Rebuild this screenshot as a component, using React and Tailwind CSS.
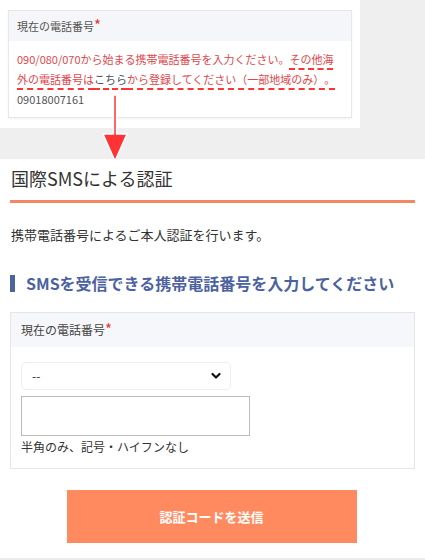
const font = { fontFamily: '"Noto Sans CJK JP", "Noto Sans", sans-serif' };

function Arrow() {
  return (
    <svg
      className="absolute left-[100px] top-[92px]"
      width="30"
      height="72"
      viewBox="0 0 30 72"
    >
      <path
        d="M13.5 3 L16.5 3 L16.5 42 L27 42 L15 69 L3 42 L13.5 42 Z"
        fill="#ff3333"
        stroke="#ffffff"
        strokeWidth="1.5"
        strokeLinejoin="round"
      />
    </svg>
  );
}

function Required() {
  return <span className="text-[#e8342f] text-[15px] leading-none align-top relative top-[-2px]">*</span>;
}

export default function App() {
  return (
    <div className="relative w-[425px] h-[560px] bg-white overflow-hidden text-[#333] [text-spacing-trim:space-all]" style={font}>
      {/* pasted screenshot of the old form */}
      <div className="bg-[#efefef] pb-[31px]">
        <div className="w-[360px] bg-white px-[8px] pt-[10px] pb-[10px]">
          <div className="border border-[#e8e8e8] shadow-[0_1px_2px_rgba(0,0,0,0.06)]">
            <div className="h-[30px] bg-[#f5f6f9] flex items-center px-[8px] text-[11px] text-[#555]">
              現在の電話番号<Required />
            </div>
            <div className="bg-white px-[8px] pt-[8px] pb-[8px] text-[11px] leading-[20px]">
              <p className="text-[#e0474c]">
                090/080/070から始まる携帯電話番号を入力ください。
                <span className="underline decoration-dashed decoration-2 decoration-[#ff3333] underline-offset-[4px]">
                  その他海外の電話番号は<span className="text-[#4a4f5c]">こちら</span>から登録してください（一部地域のみ）。
                </span>
              </p>
              <p className="text-[#555]">09018007161</p>
            </div>
          </div>
        </div>
      </div>

      {/* SMS verification */}
      <div className="px-[10px] pt-[6px]">
        <h1 className="text-[18px] leading-[26px] text-[#333] pl-px">国際SMSによる認証</h1>
        <div className="mt-[9px] h-[3px] bg-[#f4875f]" />
        <p className="mt-[22px] text-[13px] leading-[20px] pl-px">携帯電話番号によるご本人認証を行います。</p>

        <div className="mt-[26px] flex items-center gap-[11px] h-[24px]">
          <span className="w-[5px] h-[17px] bg-[#4d639c]" />
          <h2 className="text-[16px] font-bold text-[#4c62a0] leading-[24px]">SMSを受信できる携帯電話番号を入力してください</h2>
        </div>

        <div className="mt-[17px] border border-[#e6e6e6]">
          <div className="h-[34px] bg-[#f6f7fb] flex items-center px-[10px] text-[12px] text-[#444]">
            現在の電話番号<Required />
          </div>
          <div className="px-[10px] pt-[15px] pb-[12px]">
            <div className="w-[210px] h-[28px] rounded-[5px] border border-[#eeeeee] bg-white flex items-center justify-between pl-[10px] pr-[9px] text-[12px] text-[#333]">
              <span>--</span>
              <svg width="10" height="8" viewBox="0 0 10 8">
                <path d="M1.5 2 L5 5.5 L8.5 2" fill="none" stroke="#111" strokeWidth="2.2" strokeLinecap="round" strokeLinejoin="round" />
              </svg>
            </div>
            <div className="mt-[6px] w-[229px] h-[40px] border border-[#bbbbbb] bg-white" />
            <p className="mt-[2px] text-[12px] leading-[18px] text-[#333]">半角のみ、記号・ハイフンなし</p>
          </div>
        </div>

        <div className="mt-[21px] flex justify-center">
          <button className="w-[290px] h-[53px] bg-[#ff8a5f] text-white text-[13px] font-bold ml-[-2px]">
            認証コードを送信
          </button>
        </div>
      </div>
      <div className="absolute left-0 right-0 top-[558px] h-[2px] bg-[#ececec]" />

      <Arrow />
    </div>
  );
}
